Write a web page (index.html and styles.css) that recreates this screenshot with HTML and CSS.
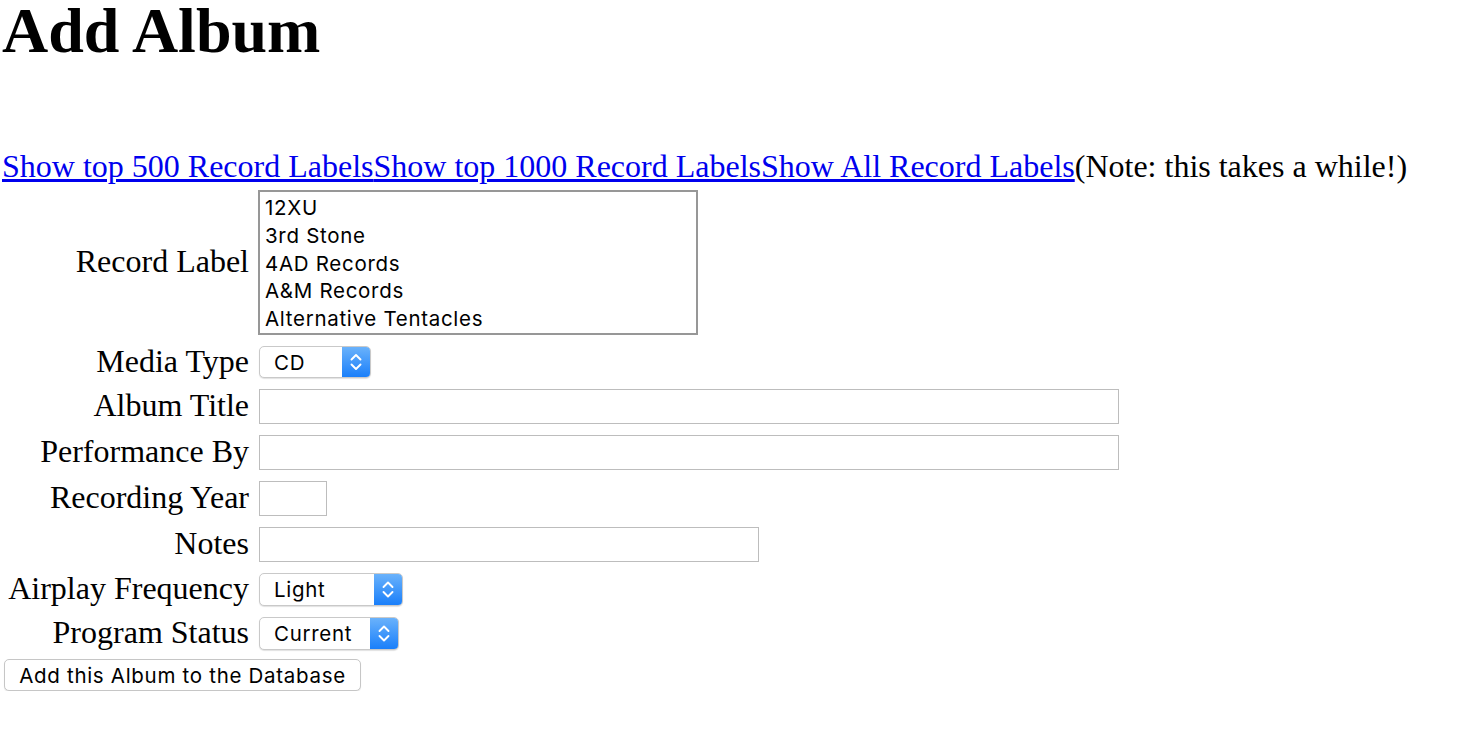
FILE: index.html
```html
<!DOCTYPE html>
<html lang="en">
<head>
<meta charset="utf-8">
<title>Add Album</title>
<link rel="stylesheet" href="styles.css">
</head>
<body>
<h1 class="title">Add Album</h1>
<p class="links"><a class="link" href="#">Show top 500 Record Labels</a><a class="link" href="#">Show top 1000 Record Labels</a><a class="link" href="#">Show All Record Labels</a>(Note: this takes a while!)</p>
<form class="form" onsubmit="return false">
  <div class="grid">
    <label class="lbl" for="record-label">Record Label</label>
    <div class="listbox" id="record-label" role="listbox">
      <div class="opt" role="option">12XU</div>
      <div class="opt" role="option">3rd Stone</div>
      <div class="opt" role="option">4AD Records</div>
      <div class="opt" role="option">A&amp;M Records</div>
      <div class="opt" role="option">Alternative Tentacles</div>
    </div>

    <label class="lbl" for="media">Media Type</label>
    <div class="sel sel-media">
      <select class="sel-input" id="media"><option>CD</option><option>LP</option><option>Cassette</option></select>
      <span class="stepper"><svg class="chev" width="28" height="30" viewBox="0 0 28 30"><path d="M9.5 12.5 L14 8 L18.5 12.5 M9.5 17.5 L14 22 L18.5 17.5" fill="none" stroke="#fff" stroke-width="1.9" stroke-linecap="round" stroke-linejoin="round"/></svg></span>
    </div>

    <label class="lbl" for="title">Album Title</label>
    <input class="txt txt-wide" id="title" type="text">

    <label class="lbl" for="perf">Performance By</label>
    <input class="txt txt-wide" id="perf" type="text">

    <label class="lbl" for="year">Recording Year</label>
    <input class="txt txt-year" id="year" type="text">

    <label class="lbl" for="notes">Notes</label>
    <input class="txt txt-notes" id="notes" type="text">

    <label class="lbl" for="airplay">Airplay Frequency</label>
    <div class="sel sel-airplay">
      <select class="sel-input" id="airplay"><option>Light</option><option>Medium</option><option>Heavy</option></select>
      <span class="stepper"><svg class="chev" width="28" height="31" viewBox="0 0 28 31"><path d="M9.5 13 L14 8.5 L18.5 13 M9.5 18 L14 22.5 L18.5 18" fill="none" stroke="#fff" stroke-width="1.9" stroke-linecap="round" stroke-linejoin="round"/></svg></span>
    </div>

    <label class="lbl" for="status">Program Status</label>
    <div class="sel sel-status">
      <select class="sel-input" id="status"><option>Current</option><option>Library</option></select>
      <span class="stepper"><svg class="chev" width="28" height="31" viewBox="0 0 28 31"><path d="M9.5 13 L14 8.5 L18.5 13 M9.5 18 L14 22.5 L18.5 18" fill="none" stroke="#fff" stroke-width="1.9" stroke-linecap="round" stroke-linejoin="round"/></svg></span>
    </div>
  </div>
  <button class="submit" type="submit">Add this Album to the Database</button>
</form>
</body>
</html>
```

FILE: styles.css
```css
html, body {
  background: #fff;
}

body {
  margin: 0;
  padding: 0 0 0 2px;
  font-family: "Liberation Serif", "Times New Roman", serif;
  font-size: 32px;
  color: #000;
}

.title {
  margin: 0;
  font-size: 64px;
  font-weight: bold;
  line-height: 62px;
}

.links {
  margin: 86px 0 0;
  line-height: 37px;
  white-space: nowrap;
}

.link {
  color: #0000ee;
  text-decoration: underline;
}

.form {
  margin: 5px 0 0;
}

.grid {
  display: grid;
  grid-template-columns: 247px auto;
  column-gap: 10px;
  row-gap: 11px;
  align-items: center;
  justify-items: start;
}

.lbl {
  justify-self: end;
  line-height: 28px;
  margin-bottom: 3px;
  white-space: nowrap;
}

.listbox {
  box-sizing: border-box;
  width: 440px;
  height: 145px;
  margin-left: -1px;
  border: 2px solid #979797;
  padding: 2px 0 0 5px;
  font-family: Inter, "Liberation Sans", sans-serif;
  font-size: 20.5px;
  letter-spacing: 0.7px;
  line-height: 27.8px;
  overflow: hidden;
  background: #fff;
}

.opt {
  white-space: nowrap;
}

.sel {
  box-sizing: border-box;
  display: flex;
  border: 1px solid #c9c9c9;
  border-radius: 5px;
  background: #fff;
  box-shadow: 0 1px 1px rgba(0, 0, 0, 0.12);
  overflow: hidden;
}

.sel-media {
  width: 112px;
  height: 32px;
}

.sel-airplay {
  width: 144px;
  height: 33px;
}

.sel-status {
  width: 140px;
  height: 33px;
}

.sel-input {
  -webkit-appearance: none;
  appearance: none;
  flex: 1;
  min-width: 0;
  border: 0;
  margin: 0;
  padding: 0 0 0 14px;
  background: transparent;
  font-family: Inter, "Liberation Sans", sans-serif;
  font-size: 20.5px;
  letter-spacing: 0.7px;
  color: #000;
  outline: none;
}

.stepper {
  flex: 0 0 28px;
  display: flex;
  align-items: center;
  justify-content: center;
  background: linear-gradient(#6ab2fb, #1a7ffa);
}

.chev {
  display: block;
}

.txt {
  box-sizing: border-box;
  height: 35px;
  margin: 0;
  border: 1px solid #bdbdbd;
  padding: 0 4px;
  font-family: Inter, "Liberation Sans", sans-serif;
  font-size: 20px;
  background: #fff;
  outline: none;
}

.txt-wide {
  width: 860px;
}

.txt-year {
  width: 68px;
}

.txt-notes {
  width: 500px;
}

.submit {
  box-sizing: border-box;
  display: block;
  width: 357px;
  height: 32px;
  margin: 9px 0 0 2px;
  padding: 0;
  border: 1px solid #c6c6c6;
  border-radius: 5px;
  background: #fff;
  box-shadow: 0 1px 1px rgba(0, 0, 0, 0.1);
  font-family: Inter, "Liberation Sans", sans-serif;
  font-size: 20.5px;
  letter-spacing: 0.7px;
  color: #000;
}
```
